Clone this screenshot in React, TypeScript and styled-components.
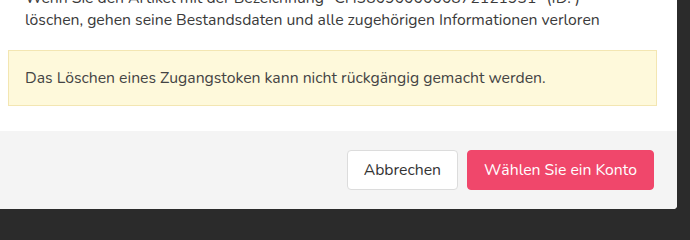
import * as React from "react";
import styled, { createGlobalStyle } from "styled-components";

const GlobalStyle = createGlobalStyle`
  html, body {
    margin: 0;
    padding: 0;
    background-color: #2b2b2b;
    overflow: hidden;
  }
  body {
    font-family: "Nunito", "Lato", "Noto Sans", sans-serif;
  }
`;

const Page = styled.div`
  width: 690px;
  height: 240px;
  overflow: hidden;
`;

const Modal = styled.div`
  width: 681px;
  margin: -13px 0 0 -4px;
  background-color: #ffffff;
  border-radius: 0 0 4px 4px;
  overflow: hidden;
`;

const ModalBody = styled.div`
  padding: 0 20px 25px 12px;
`;

const Message = styled.p`
  margin: 0 0 19px;
  padding: 0 17px;
  font-size: 15.75px;
  line-height: 22px;
  color: #3a3a3a;
`;

const Alert = styled.div`
  padding: 17px 16px;
  background-color: #fef9db;
  border: 1px solid #f3e6b2;
  font-size: 15.75px;
  line-height: 20px;
  color: #444444;
`;

const Footer = styled.div`
  display: flex;
  justify-content: flex-end;
  gap: 9px;
  padding: 19px 23px 19px 0;
  background-color: #f4f4f4;
`;

const Button = styled.button<{ $primary?: boolean }>`
  height: 40px;
  padding: 0 16px;
  border-radius: 4px;
  font-family: inherit;
  font-size: 15.75px;
  cursor: pointer;
  border: 1px solid ${(p) => (p.$primary ? "#f0476b" : "#dcdcdc")};
  background-color: ${(p) => (p.$primary ? "#f0476b" : "#ffffff")};
  color: ${(p) => (p.$primary ? "#ffffff" : "#333333")};
`;

const App: React.FC = () => {
  return (
    <Page>
      <GlobalStyle />
      <Modal>
        <ModalBody>
          <Message>
            Wenn Sie den Artikel mit der Bezeichnung "CH3809000000872121931" (ID: )
            <br />
            löschen, gehen seine Bestandsdaten und alle zugehörigen Informationen verloren
          </Message>
          <Alert>
            Das Löschen eines Zugangstoken kann nicht rückgängig gemacht werden.
          </Alert>
        </ModalBody>
        <Footer>
          <Button>Abbrechen</Button>
          <Button $primary>Wählen Sie ein Konto</Button>
        </Footer>
      </Modal>
    </Page>
  );
};

export default App;
